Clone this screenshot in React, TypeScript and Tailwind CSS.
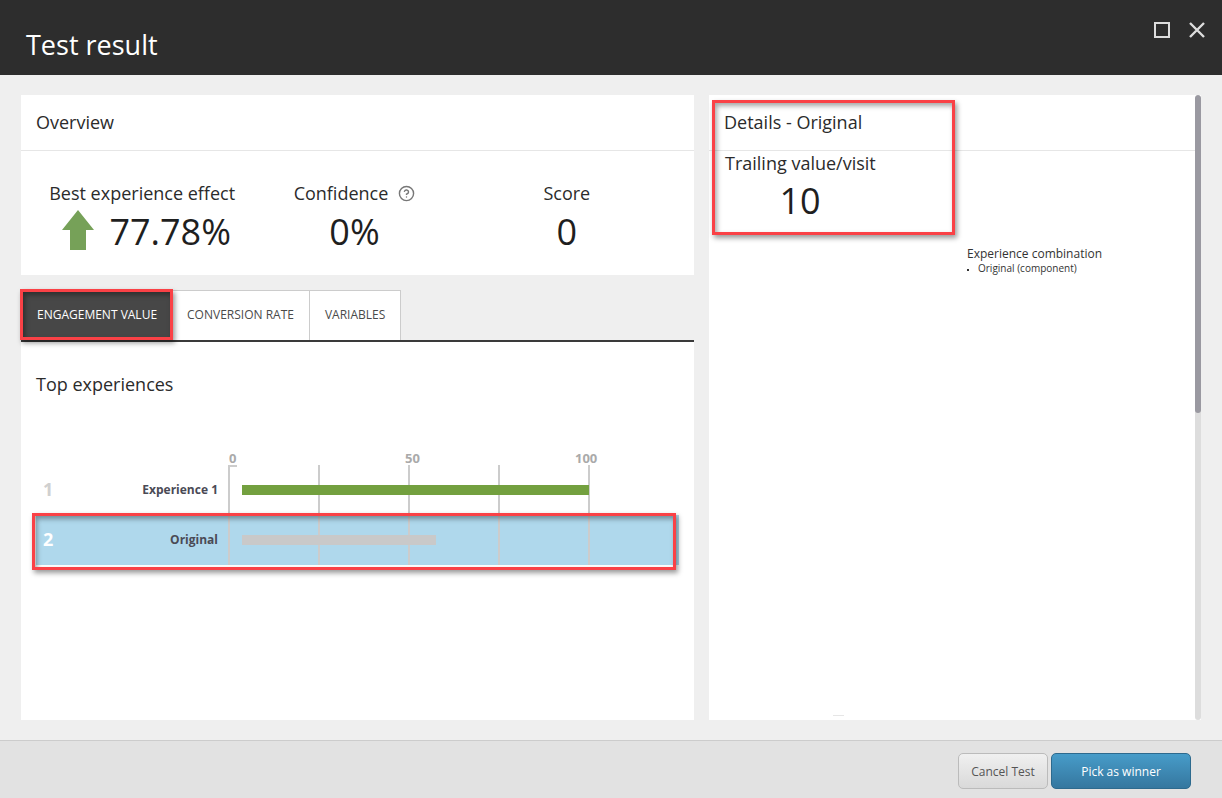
import { CircleHelp } from "lucide-react"

function RedBox({ className }: { className: string }) {
  return (
    <div
      className={`absolute pointer-events-none z-20 border-[3px] border-[#fa4146] shadow-[2px_3px_5px_rgba(0,0,0,0.4),inset_2px_3px_5px_rgba(0,0,0,0.35)] ${className}`}
    ></div>
  )
}

function Stat({ label, value, help, arrow }: { label: string; value: string; help?: boolean; arrow?: boolean }) {
  return (
    <div className="flex flex-col items-center">
      <div className="flex items-center h-[24px] text-[18px] leading-[24px] text-[#2b2b2b]">
        {label}
        {help && <CircleHelp className="w-[17px] h-[17px] ml-[10px] text-[#777777]" />}
      </div>
      <div className={`flex items-center h-[50px] mt-[2px] text-[36px] leading-[50px] text-[#1f1f1f] ${arrow ? "ml-[9px]" : ""}`}>
        {arrow && (
          <svg width="32" height="40" viewBox="0 0 32 40" className="mr-[15px] mb-[4px]">
            <path d="M16 0 L32 20 L24 20 L24 40 L8 40 L8 20 L0 20 Z" fill="#76a158" />
          </svg>
        )}
        {value}
      </div>
    </div>
  )
}

function Tab({ label, active }: { label: string; active?: boolean }) {
  if (active) {
    return (
      <div className="relative flex items-center h-[50px] pl-[16px] pr-[15px] bg-[#474747] text-white text-[12px]">
        {label}
        <RedBox className="-left-[1px] -top-[1px] -right-[1px] bottom-0" />
      </div>
    )
  }
  return (
    <div className="flex items-center h-[50px] px-[15px] pb-[2px] bg-white border border-l-0 border-b-0 border-[#cccccc] text-[#4a4a4a] text-[12px]">
      {label}
    </div>
  )
}

export default function App() {
  return (
    <div className="w-[1222px] h-[798px] flex flex-col overflow-hidden bg-[#efefef] font-['Open_Sans',sans-serif]">
      <header className="relative shrink-0 h-[75px] bg-[#2d2d2d] flex items-end pl-[26px] pb-[12px]">
        <h1 className="text-[27px] leading-[36px] text-white">Test result</h1>
        <div className="absolute right-[17px] top-[22px] flex items-center gap-[19px]">
          <div className="w-[16px] h-[16px] border-2 border-[#dddddd]"></div>
          <svg width="16" height="16" viewBox="0 0 16 16">
            <path d="M1 1 L15 15 M15 1 L1 15" stroke="#dddddd" strokeWidth="2.4" fill="none" />
          </svg>
        </div>
      </header>

      <main className="flex-1 min-h-0 flex gap-[15px] pl-[21px] pr-[21px] py-[20px]">
        <div className="w-[673px] flex flex-col">
          <section className="h-[180px] bg-white shrink-0">
            <div className="h-[56px] flex items-center pl-[15px] border-b border-[#e6e6e6] text-[18px] text-[#2b2b2b] pb-[1px]">
              Overview
            </div>
            <div className="grid grid-cols-3 pl-[15px] pr-[21px] pt-[30px]">
              <Stat label="Best experience effect" value="77.78%" arrow />
              <Stat label="Confidence" value="0%" help />
              <Stat label="Score" value="0" />
            </div>
          </section>

          <div className="mt-[15px] flex h-[52px] shrink-0 border-b-2 border-[#3a3a3a]">
            <Tab label="ENGAGEMENT VALUE" active />
            <Tab label="CONVERSION RATE" />
            <Tab label="VARIABLES" />
          </div>

          <section className="flex-1 bg-white pl-[15px] pr-[15px]">
            <h2 className="mt-[30px] text-[18px] leading-[24px] text-[#2b2b2b]">Top experiences</h2>

            <div className="relative mt-[55px]">
              <div className="relative h-[14px] text-[13px] leading-[16px] font-bold text-[#aaaaaa]">
                <span className="absolute left-[193px] top-[-1px]">0</span>
                <span className="absolute left-[369px] top-[-1px]">50</span>
                <span className="absolute left-[539px] top-[-1px]">100</span>
              </div>

              <div className="relative">
                <div className="absolute top-0 bottom-0 left-[192px] w-[2px] bg-[#cccccc] z-10"></div>
                <div className="absolute top-0 left-[192px] w-[9px] h-[2px] bg-[#cccccc] z-10"></div>
                <div className="absolute top-0 bottom-0 left-[282px] w-[2px] bg-[#cccccc] z-10"></div>
                <div className="absolute top-0 bottom-0 left-[372px] w-[2px] bg-[#cccccc] z-10"></div>
                <div className="absolute top-0 bottom-0 left-[462px] w-[2px] bg-[#cccccc] z-10"></div>
                <div className="absolute top-0 bottom-0 left-[552px] w-[2px] bg-[#cccccc] z-10"></div>

                <div className="flex items-center h-[50px]">
                  <span className="w-[30px] pl-[7px] pb-[2px] text-[18px] font-bold text-[#d0d0d0]">1</span>
                  <span className="w-[152px] text-right text-[12px] font-bold text-[#4a4a55]">Experience 1</span>
                  <div className="relative z-10 ml-[24px] w-[347px] h-[10px] bg-[#73a03f]"></div>
                </div>

                <div className="relative flex items-center h-[50px] bg-[#afd8ec]">
                  <span className="w-[30px] pl-[7px] pb-[2px] text-[18px] font-bold text-white">2</span>
                  <span className="w-[152px] text-right text-[12px] font-bold text-[#4a4a55]">Original</span>
                  <div className="relative z-10 ml-[24px] w-[194px] h-[10px] bg-[#c9c9c9]"></div>
                  <RedBox className="left-[-4px] top-[-2px] right-[3px] bottom-[-5px]" />
                </div>
              </div>
            </div>
          </section>
        </div>

        <aside className="relative flex-1 flex min-w-0 bg-white">
          <div className="flex-1 min-w-0">
            <div className="h-[56px] flex items-center pl-[15px] border-b border-[#e6e6e6] text-[18px] text-[#2b2b2b] pb-[1px]">
              Details - Original
            </div>
            <div className="pl-[16px]">
              <div className="text-[18px] leading-[24px] text-[#2b2b2b]">Trailing value/visit</div>
              <div className="w-[150px] mt-[1px] text-center text-[36px] leading-[50px] text-[#1f1f1f]">10</div>
            </div>
            <div className="ml-[258px] mt-[19px]">
              <div className="text-[12px] leading-[17px] text-[#333333]">Experience combination</div>
              <ul className="list-[square] pl-[11px] text-[10px] leading-[13px] text-[#333333] marker:text-[7px]">
                <li>Original (component)</li>
              </ul>
            </div>
          </div>
          <div className="w-[6px] shrink-0 bg-[#dddddd] rounded-full overflow-hidden">
            <div className="h-[318px] bg-[#9a99a1] rounded-full"></div>
          </div>
          <div className="absolute left-[124px] bottom-[4px] w-[11px] h-[1px] bg-[#e6e6e6]"></div>
          <RedBox className="left-[3px] top-[5px] w-[243px] h-[135px]" />
        </aside>
      </main>

      <footer className="shrink-0 h-[58px] bg-[#e2e2e2] border-t border-[#cccccc] flex items-start justify-end gap-[3px] pt-[12px] pr-[31px]">
        <button className="w-[90px] h-[36px] pt-[1px] rounded-[5px] border border-[#bbbbbb] bg-gradient-to-b from-[#f0f0f0] to-[#d9d9d9] text-[12px] text-[#555555]">
          Cancel Test
        </button>
        <button className="w-[140px] h-[36px] pt-[1px] rounded-[5px] border border-[#2d6a8e] bg-gradient-to-b from-[#479cc9] to-[#35779f] text-[12px] text-white">
          Pick as winner
        </button>
      </footer>
    </div>
  )
}
